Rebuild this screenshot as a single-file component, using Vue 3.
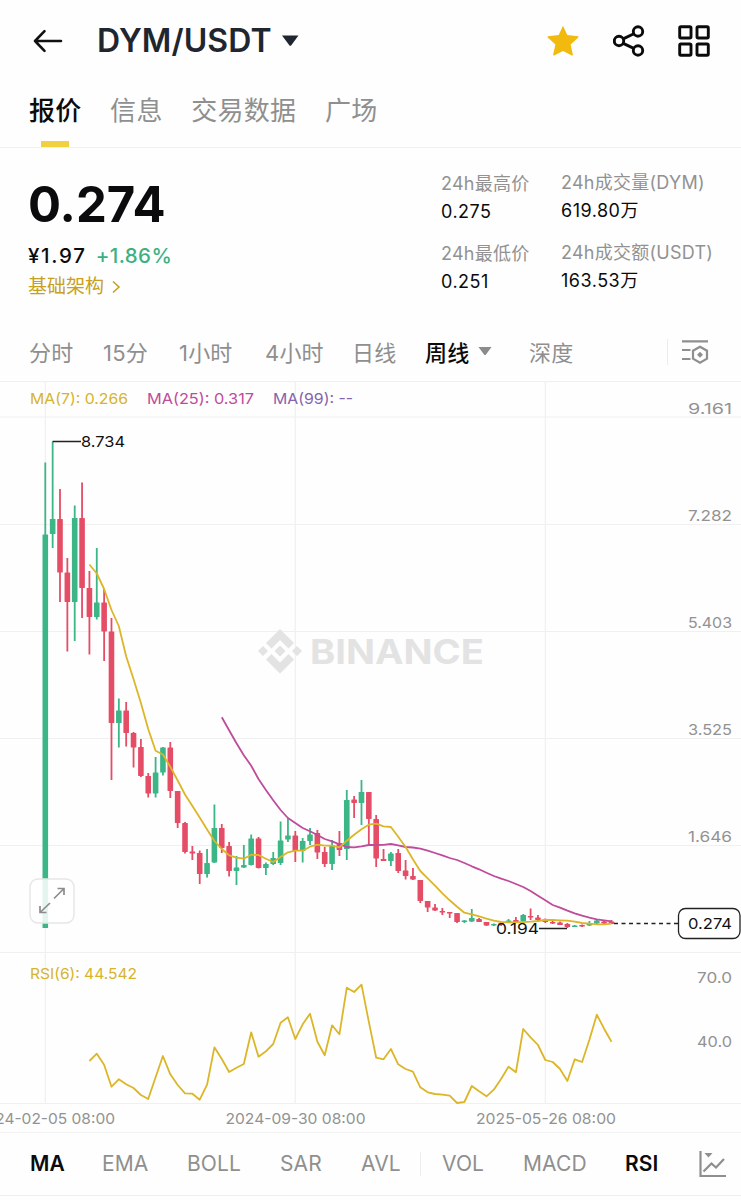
<script setup>
const tabs = ['报价', '信息', '交易数据', '广场']
const periods = ['分时', '15分', '1小时', '4小时', '日线', '周线', '深度']
const indicators = ['MA', 'EMA', 'BOLL', 'SAR', 'AVL', 'VOL', 'MACD', 'RSI']
const activeIndicators = ['MA', 'RSI']

const stats = [
  { label: '24h最高价', value: '0.275' },
  { label: '24h成交量(DYM)', value: '619.80万' },
  { label: '24h最低价', value: '0.251' },
  { label: '24h成交额(USDT)', value: '163.53万' },
]

const gridY = [417, 524.5, 631.5, 738.5, 845.5, 952.5, 1103.5]
const gridX = [45.3, 295.3, 545.3]
const axis = [
  { y: 413.5, text: '9.161' },
  { y: 520.5, text: '7.282' },
  { y: 627.5, text: '5.403' },
  { y: 734.5, text: '3.525' },
  { y: 841.5, text: '1.646' },
]

// 週足: [高値, 実体上, 実体下, 安値, 陽線かどうか]
const candles = [
  [462.5, 534.5, 928, 928, 1], [441.5, 519, 534, 548, 1], [489, 519, 572.5, 602, 0],
  [558, 572.5, 602, 651.5, 0], [505.5, 518, 602, 641, 1], [482.5, 518, 588, 618, 0],
  [571, 588, 617, 654.5, 0], [548, 602.5, 617, 619.5, 1], [589, 602.5, 631.5, 661, 0],
  [618, 631.5, 723, 780, 0], [698.5, 710.5, 723, 747.5, 1], [702, 710.5, 733, 746.5, 0],
  [732, 733, 747.5, 767.5, 0], [739, 747, 776, 777, 0], [773, 776, 793.5, 797.5, 0],
  [757, 772.5, 793.5, 797.5, 1], [747, 747.5, 772.5, 775.5, 1], [742, 747.5, 791, 798, 0],
  [791, 791, 823, 828, 0], [822, 823, 852, 853.5, 0], [846, 851.5, 853.5, 860, 0],
  [850.5, 853, 874, 884, 0], [849, 863, 874, 877.5, 1], [804.5, 828, 862.5, 863, 1],
  [824, 828, 848, 853, 0], [842, 846, 871, 876.5, 0], [856, 867.5, 871, 885, 1],
  [845, 865, 867.5, 868, 1], [834.5, 838.5, 865, 865.5, 1], [837, 838.5, 868, 868.5, 0],
  [862.5, 864, 868, 875, 1], [852, 858, 864, 865, 1], [821.5, 840.5, 863, 865, 1],
  [818, 835.5, 839.5, 842, 1], [831, 835.5, 851, 862, 0], [838, 841, 851, 862.5, 1],
  [828, 834.5, 841, 845, 1], [830, 833, 852.5, 859, 0], [847, 852, 864, 867, 0],
  [840, 845, 864, 870, 1], [831, 843, 850, 856, 0], [790, 800, 849, 860, 1],
  [796, 799.5, 803, 818, 0], [780, 792, 803, 825, 1], [792, 792, 819, 846, 0],
  [815, 819, 858.5, 867, 0], [849, 859, 861, 861, 0], [852, 853.5, 861, 866, 1],
  [849, 853, 871, 873, 0], [860, 870.5, 876, 879.5, 0], [868, 876, 879.5, 880, 0],
  [880, 880, 901, 903, 0], [901, 901, 907.5, 912, 0], [904, 907.5, 910.5, 911, 0],
  [908, 911, 912.5, 915, 0], [912, 912, 913.5, 918, 0], [913, 913, 922, 923, 0],
  [920, 920.5, 922, 923, 1], [909, 918, 921.5, 922, 1], [918, 919, 922, 922, 0],
  [922, 922, 925.5, 926, 0], [923.5, 924, 925.5, 926, 1], [922, 923, 925, 926, 0],
  [919, 920.5, 922, 922, 1], [917, 920, 922, 922, 0], [914, 915, 921, 922, 1],
  [908.5, 916, 917.5, 920, 0], [915, 917.5, 920, 921, 0], [918.5, 919.5, 922, 923, 0],
  [921, 922, 923.5, 924, 0], [921.5, 922.5, 925, 925, 0], [923, 924, 927, 928, 0],
  [925, 925.5, 927, 927, 1], [924.5, 925, 926.5, 927, 0], [921, 923, 925.5, 926, 1],
  [919.5, 920.5, 923.5, 924, 1], [921, 921.5, 923.5, 924, 0], [920, 921.5, 924, 924, 0],
]

const ma7 = [
  564.5, 573.5, 589, 610, 626, 656.5, 679, 703, 729, 750.7, 754.5, 766.7, 780.5, 794.5, 806,
  817.5, 829.5, 841, 849, 855.3, 857.7, 858.7, 854.7, 855, 858.7, 862, 857, 852.3, 850.7,
  850.7, 846.7, 844.7, 845.7, 845.7, 847.3, 840.7, 834.7, 829.3, 824.7, 823.7, 826.3, 827,
  836.7, 847, 859.3, 871, 878.3, 885.7, 893.3, 900.3, 906.7, 912.7, 914.3, 916.3, 918.7,
  920.7, 922, 922.3, 922.3, 922, 921.7, 921, 920, 920, 920.3, 920.7, 921.7, 923, 923.7,
  924.3, 924.3, 923.7,
]
const ma25 = [
  717.3, 730.3, 743.3, 755.3, 765.7, 779, 790, 800.3, 810, 818, 823, 828, 831.3, 835, 839,
  841.3, 844.3, 847, 847.3, 846.3, 845, 845, 844.8, 844, 845.3, 847, 847.5, 848.7, 850.7,
  853, 855.3, 858, 860, 863, 866.3, 869.3, 872.7, 876, 878.7, 881, 884, 887, 891, 895.7,
  900.3, 905, 907.7, 910.7, 913.3, 915.7, 917.7, 919.3, 920.3, 921.3,
]
const rsi = [
  1061, 1053.7, 1064.7, 1086.7, 1079.3, 1084.3, 1088, 1095, 1099, 1077.3, 1056, 1074.3,
  1085, 1093.3, 1093.7, 1099.7, 1084.7, 1047.3, 1059, 1072, 1067.7, 1064, 1032.3, 1056.7,
  1051.3, 1044, 1022.7, 1017.3, 1039, 1024.3, 1013.7, 1041.7, 1055.3, 1025.3, 1034.3,
  987.7, 992, 984.7, 1021.7, 1057.7, 1059.3, 1049, 1064.3, 1069, 1071.7, 1087.3, 1092.3,
  1094, 1094.7, 1095.7, 1103, 1102, 1086, 1091.3, 1096.3, 1089.7, 1078.7, 1066.7, 1072.3,
  1029, 1037.3, 1045, 1060, 1062, 1069, 1081, 1059.3, 1062, 1039.7, 1014.7, 1028.7, 1041.7,
]

const xAt = (i) => 45.3 + i * 7.353

function toPoints(values, start) {
  return values.map((y, i) => `${xAt(start + i).toFixed(1)},${y}`).join(' ')
}
</script>

<template>
  <div class="page">
    <header class="topbar">
      <svg class="back" width="30" height="24" viewBox="0 0 30 24">
        <path d="M11.5 2.2 2 12l9.500 9.800M2 12h26" />
      </svg>
      <h1>DYM/USDT</h1>
      <svg class="caret" width="18" height="12" viewBox="0 0 18 12">
        <path d="M1 .5h16.500L10.300 10.300q-1 1-2 0z" />
      </svg>
      <div class="actions">
        <svg width="32" height="32" viewBox="0 0 32 32">
          <path
            class="star"
            d="M16 .700 20.300 10.100 31 11.200Q31.800 11.700 31.300 12.400L23.600 19.500l2.300 10.300q-.1.900-1 .6L16 26 7.100 30.400q-.9.300-1-.6L8.400 19.500 .7 12.400Q.2 11.700 1 11.200L11.700 10.100z"
          />
        </svg>
        <svg class="line" width="32" height="32" viewBox="0 0 32 32">
          <circle cx="6" cy="16" r="4.700" />
          <circle cx="25" cy="6.500" r="4.700" />
          <circle cx="25" cy="25.500" r="4.700" />
          <path d="m10.200 13.900 10.600-5.200M10.200 18.400l10.600 5" />
        </svg>
        <svg class="line" width="34" height="34" viewBox="0 0 34 34">
          <rect x="2.700" y="2.700" width="11.300" height="11.300" rx="1.200" />
          <rect x="20" y="2.700" width="11.300" height="11.300" rx="1.200" />
          <rect x="2.700" y="20" width="11.300" height="11.300" rx="1.200" />
          <rect x="20" y="20" width="11.300" height="11.300" rx="1.200" />
        </svg>
      </div>
    </header>

    <nav class="tabs">
      <span v-for="(t, i) in tabs" :key="t" class="tab" :class="{ active: i === 0 }">{{ t }}</span>
    </nav>

    <section class="summary">
      <div class="quote">
        <div class="price">0.274</div>
        <div class="sub"><span class="cny">¥1.97</span><span class="change">+1.86%</span></div>
        <div class="category">
          基础架构
          <svg width="10" height="14" viewBox="0 0 10 14"><path d="m2 1.500 6 5.500-6 5.500" /></svg>
        </div>
      </div>
      <div class="stats">
        <div v-for="s in stats" :key="s.label" class="stat">
          <div class="stat-label">{{ s.label }}</div>
          <div class="stat-value">{{ s.value }}</div>
        </div>
      </div>
    </section>

    <nav class="periods">
      <span v-for="p in periods" :key="p" class="period" :class="{ active: p === '周线' }">
        {{ p }}
        <svg v-if="p === '周线'" width="14" height="10" viewBox="0 0 14 10"><path d="M.5 1h13L8 8.500q-1 1-2 0z" /></svg>
      </span>
      <span class="settings">
        <svg width="28" height="26" viewBox="0 0 28 26">
          <path d="M1 2.300h26M1 11h8.500M1 20h8.500" />
          <path d="m19 7.700 7 4v8l-7 4-7-4v-8z" />
          <path class="fill" d="m19 12.700 3 3-3 3-3-3z" />
        </svg>
      </span>
    </nav>

    <svg class="chart" width="741" height="750" viewBox="0 382 741 750">
      <g class="grid">
        <line v-for="y in gridY" :key="y" x1="0" x2="741" :y1="y" :y2="y" />
        <line v-for="x in gridX" :key="x" :x1="x" :x2="x" y1="382" y2="1103" />
      </g>

      <!-- 透かしロゴ -->
      <g class="watermark">
        <path d="m280 629 14 14-5.500 5.500-8.500-8.500-8.500 8.500-5.500-5.500zM280 673.500l-14-14 5.500-5.500 8.500 8.500 8.500-8.500 5.500 5.500z" />
        <path d="m263 646 5 5-5 5-5-5zM297 646l5 5-5 5-5-5zM280 645.500l5.500 5.500-5.500 5.500-5.500-5.500z" />
        <text x="310" y="663.500" textLength="174" lengthAdjust="spacingAndGlyphs">BINANCE</text>
      </g>

      <g v-for="(c, i) in candles" :key="i" :class="c[4] ? 'up' : 'down'">
        <rect :x="xAt(i) - 0.9" :y="c[0]" width="1.8" :height="c[3] - c[0]" />
        <rect :x="xAt(i) - 2.8" :y="c[1]" width="5.6" :height="c[2] - c[1]" rx="0.4" />
      </g>

      <polyline class="curve ma25" :points="toPoints(ma25, 24)" />
      <polyline class="curve ma7" :points="toPoints(ma7, 6)" />
      <polyline class="curve ma7" :points="toPoints(rsi, 6)" />

      <g class="legend">
        <text class="yellow" x="30" y="404" textLength="98" lengthAdjust="spacingAndGlyphs">MA(7): 0.266</text>
        <text class="pink" x="147" y="404" textLength="107" lengthAdjust="spacingAndGlyphs">MA(25): 0.317</text>
        <text class="purple" x="273" y="404" textLength="80" lengthAdjust="spacingAndGlyphs">MA(99): --</text>
        <text class="yellow" x="30" y="979" textLength="107" lengthAdjust="spacingAndGlyphs">RSI(6): 44.542</text>
      </g>

      <g class="axis">
        <text v-for="a in axis" :key="a.text" x="688" :y="a.y" textLength="44" lengthAdjust="spacingAndGlyphs">{{ a.text }}</text>
        <text x="697" y="982.500" textLength="35" lengthAdjust="spacingAndGlyphs">70.0</text>
        <text x="697" y="1046.500" textLength="35" lengthAdjust="spacingAndGlyphs">40.0</text>
        <text x="-24" y="1124" textLength="139" lengthAdjust="spacingAndGlyphs">2024-02-05 08:00</text>
        <text x="225.500" y="1124" textLength="140" lengthAdjust="spacingAndGlyphs">2024-09-30 08:00</text>
        <text x="476" y="1124" textLength="140" lengthAdjust="spacingAndGlyphs">2025-05-26 08:00</text>
      </g>

      <g class="marks">
        <path d="M52.600 441.500H81M539 928.500h28" />
        <path class="dash" d="M614 923.500h64" />
        <text x="81" y="447" textLength="44" lengthAdjust="spacingAndGlyphs">8.734</text>
        <text x="496" y="934" textLength="43" lengthAdjust="spacingAndGlyphs">0.194</text>
        <rect x="678.500" y="908.500" width="61.500" height="30" rx="7" />
        <text x="688" y="929" textLength="44" lengthAdjust="spacingAndGlyphs">0.274</text>
      </g>

      <g class="expand">
        <rect x="30" y="879" width="44" height="44" rx="8" />
        <path d="m54 898.500 10-10M57.500 888.500H64v6.500M50 903l-10 9.500M40 906v6.500h6.500" />
      </g>
    </svg>

    <nav class="indicators">
      <span v-for="n in indicators" :key="n" class="indicator" :class="{ active: activeIndicators.includes(n), split: n === 'AVL' }">{{ n }}</span>
      <svg width="28" height="28" viewBox="0 0 28 28">
        <path d="M1.500 1v25H27M4.500 21.500l8-8 4.500 4 8-8.500" />
        <path class="fill" d="M5.500 3h8l-4 4.500z" />
      </svg>
    </nav>
  </div>
</template>

<style>
body {
  background: #fefefe;
}
</style>

<style scoped>
.page {
  width: 741px;
  height: 1200px;
  overflow: hidden;
  background: #fefefe;
  color: #0b0b0d;
  font-family: Inter, 'Noto Sans CJK SC', sans-serif;
}

svg {
  display: block;
  fill: none;
}

.topbar {
  display: flex;
  align-items: center;
  height: 82px;
  padding: 0 30px 0 33px;
}

.back {
  stroke: #111;
  stroke-width: 2.6;
  stroke-linecap: round;
  stroke-linejoin: round;
}

h1 {
  width: 174px;
  margin: 0 10px 0 34px;
  font-size: 32px;
  font-weight: 600;
  line-height: 40px;
  letter-spacing: 0.1px;
  white-space: nowrap;
  color: #1f2630;
}

.caret {
  fill: #1f2630;
}

.actions {
  display: flex;
  align-items: center;
  gap: 34px;
  margin-left: auto;
}

.actions svg:last-child {
  margin-left: -2px;
}

.star {
  fill: #f2b90e;
}

.line {
  stroke: #0b0b0b;
  stroke-width: 2.9;
}

.tabs {
  display: flex;
  gap: 28.5px;
  height: 66px;
  padding-left: 29px;
  border-bottom: 1px solid #f0f0f0;
  box-sizing: border-box;
  font-size: 26px;
  line-height: 58px;
  letter-spacing: 0.3px;
  color: #8f8f8f;
}

.tab.active {
  position: relative;
  font-weight: 500;
  color: #0b0b0b;
}

.tab.active::after {
  content: '';
  position: absolute;
  left: 12px;
  bottom: 0;
  width: 28px;
  height: 6px;
  background: #f2d13f;
}

.summary {
  display: flex;
  justify-content: space-between;
  height: 175px;
  padding-left: 28px;
}

.price {
  margin-top: 29px;
  font-size: 49px;
  font-weight: 700;
  line-height: 56px;
  letter-spacing: 0;
}

.sub {
  display: flex;
  gap: 9px;
  margin-top: 8px;
  font-size: 20.5px;
  font-weight: 500;
  line-height: 30px;
  letter-spacing: 0.4px;
}

.cny {
  letter-spacing: 1.7px;
}

.change {
  color: #3bb183;
}

.category {
  display: flex;
  align-items: center;
  gap: 7px;
  margin-top: 2px;
  font-size: 19px;
  line-height: 28px;
  color: #c8a020;
}

.category svg {
  stroke: #c8a020;
  stroke-width: 1.6;
}

.stats {
  display: grid;
  grid-template-columns: 120px 180px;
  grid-auto-rows: 70px;
  padding-top: 21px;
}

.stat:nth-child(odd) {
  padding-top: 1px;
}

.stat-label {
  font-size: 18px;
  line-height: 28px;
  letter-spacing: 0.25px;
  white-space: nowrap;
  color: #929292;
}

.stat-value {
  font-size: 18px;
  line-height: 28px;
  letter-spacing: 0.5px;
}

.periods {
  display: grid;
  grid-template-columns: 74px 76px 86px 87px 73px 104px 138px 60px;
  align-items: center;
  height: 58px;
  padding-left: 29px;
  border-bottom: 1px solid #f0f0f0;
  font-size: 22px;
  color: #8f8f8f;
}

.period {
  display: flex;
  align-items: center;
  gap: 9px;
  padding-bottom: 2px;
  letter-spacing: 0.2px;
  white-space: nowrap;
}

.period.active {
  font-weight: 500;
  color: #0b0b0b;
}

.period svg {
  fill: #8b8b8b;
}

.settings {
  padding-left: 13px;
  border-left: 1px solid #ececec;
}

.settings svg,
.indicators svg {
  stroke: #8f8f8f;
  stroke-width: 2.2;
}

.settings .fill,
.indicators .fill {
  fill: #8f8f8f;
  stroke: none;
}

.grid line {
  stroke: #f0f0f0;
  stroke-width: 1.2;
}

.watermark {
  fill: #e3e3e3;
}

.watermark text {
  font-size: 34px;
  font-weight: 700;
}

.up {
  fill: #3cb587;
}

.down {
  fill: #e54d67;
}

.curve {
  stroke-width: 1.8;
  stroke-linejoin: round;
}

.ma7 {
  stroke: #dcb628;
}

.ma25 {
  stroke: #bf4c9b;
}

.legend {
  font-size: 15px;
}

.yellow {
  fill: #d6b42c;
}

.pink {
  fill: #bf4c9b;
}

.purple {
  fill: #8463ac;
}

.axis {
  font-size: 15px;
  fill: #929292;
}

.marks {
  font-size: 15px;
}

.marks text {
  fill: #101010;
}

.marks path,
.marks rect {
  stroke: #222;
  stroke-width: 1.3;
}

.marks .dash {
  stroke-dasharray: 4 3.5;
}

.marks rect {
  fill: #fff;
}

.expand rect {
  fill: #fff;
  fill-opacity: 0.86;
  stroke: #e6e6e6;
  stroke-width: 1.4;
}

.expand path {
  stroke: #8c8c8c;
  stroke-width: 1.7;
}

.indicators {
  display: grid;
  grid-template-columns: 72px 85px 93px 81px 81px 81px 102px 74px 28px;
  align-items: center;
  height: 64px;
  padding-left: 30px;
  border-top: 1px solid #f3f3f3;
  border-bottom: 1px solid #eee;
  box-sizing: border-box;
  font-size: 21px;
  line-height: 24px;
  letter-spacing: 0.1px;
  color: #8f8f8f;
}

.indicator.active {
  font-weight: 600;
  color: #0b0b0b;
}

.indicator.split {
  width: 59px;
  border-right: 1px solid #ededed;
}
</style>
